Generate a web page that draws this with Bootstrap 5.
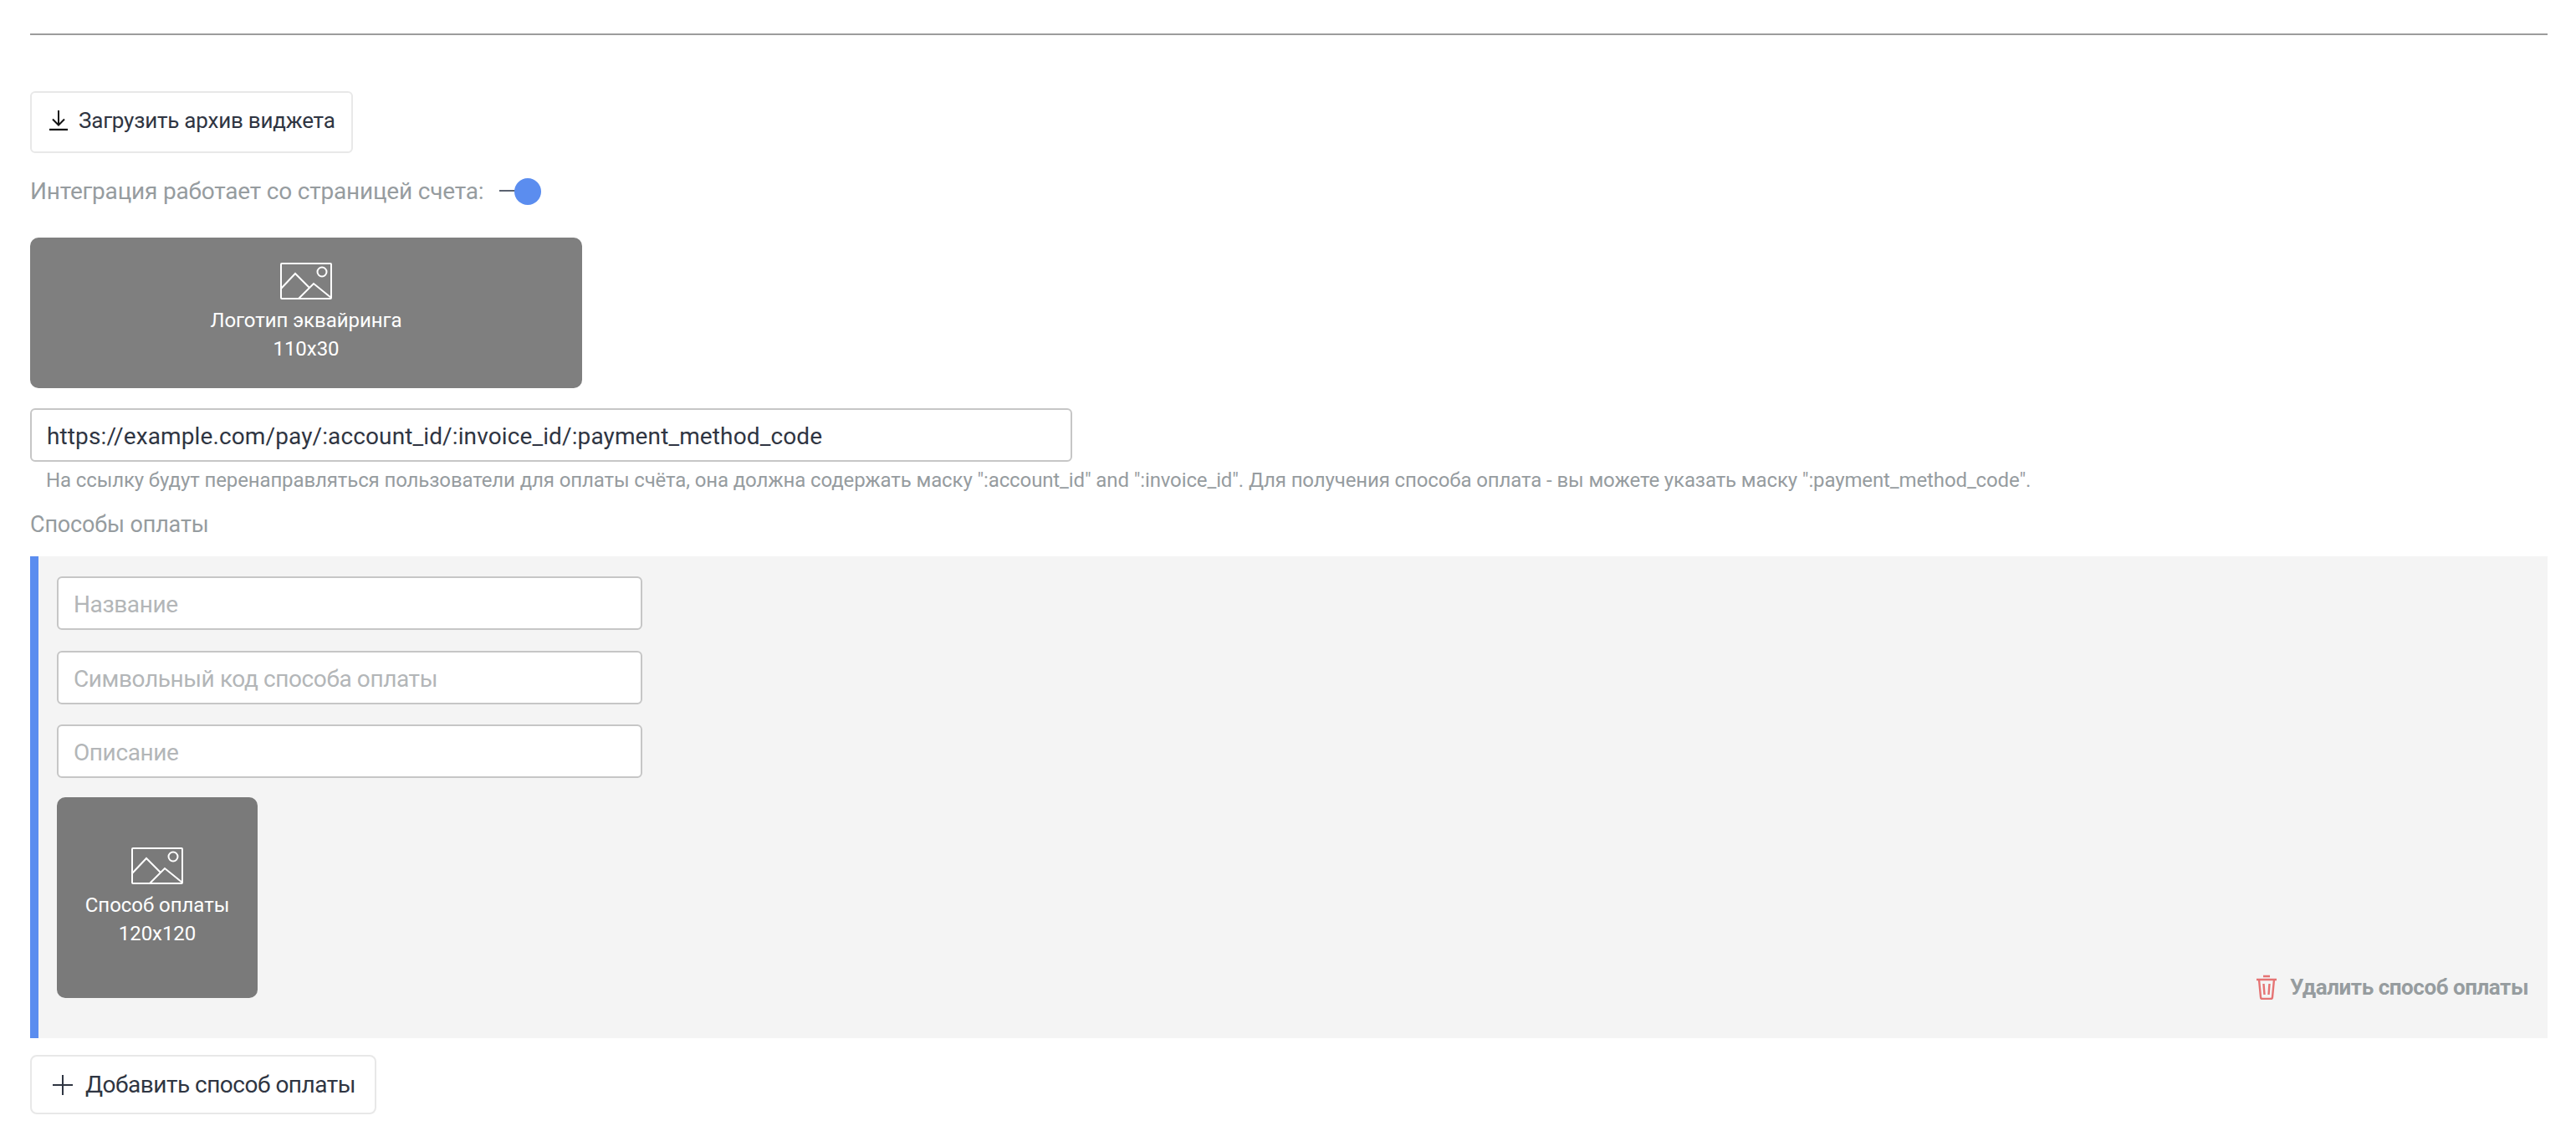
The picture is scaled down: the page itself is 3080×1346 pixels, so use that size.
<!DOCTYPE html>
<html lang="ru"><head><meta charset="utf-8"><title>Виджет</title>
<link rel="stylesheet" href="https://cdn.jsdelivr.net/npm/bootstrap@5.3.0/dist/css/bootstrap.min.css">
<style>
body{font-family:Roboto,"Noto Sans","Liberation Sans",sans-serif;color:#2f3542;background:#fff}
.page-wrap{padding:40px 34px 0 36px}
.top-rule{margin:0 0 67px;border:0;border-top:2px solid #9c9c9c;opacity:1}
.act-btn{display:inline-flex;align-items:center;background:#fff;border:2px solid #e8e8e8;border-radius:6px;color:#2f3542;font-size:26px;line-height:34px;padding:16px 19px 20px 20px;letter-spacing:-.22px}
.act-btn svg{flex:none;margin-right:12px}
.act-add{height:71px;font-size:28px;padding:0 23px 0 25px;border-radius:8px;margin-top:20px;letter-spacing:-.5px}
.act-add svg{margin-right:15px}
.switch-row{height:64px;margin-bottom:23px;color:#969c9f;font-size:28px;letter-spacing:-.2px;margin-top:14px}
.mini-switch{position:relative;width:48px;height:32px;margin-left:19px}
.mini-switch::before{content:"";position:absolute;left:0;top:14px;width:20px;height:2px;background:#5a6270}
.mini-switch::after{content:"";position:absolute;left:18px;top:0;width:32px;height:32px;border-radius:50%;background:#5b8def}
.upload-box{background:rgba(0,0,0,.5);color:#fff;border-radius:10px;font-size:24px;line-height:34px;text-align:center;display:flex;flex-direction:column;align-items:center;letter-spacing:-.05px}
.upload-logo{width:660px;height:180px;padding-top:30px}
.upload-pay{width:240px;height:240px;padding-top:60px}
.upload-box svg{margin-bottom:8px}
.field-url.form-control{width:1246px;height:64px;margin-top:24px;border:2px solid #c6c6c6;border-radius:6px;font-size:28px;padding:2px 18px 0;color:#2f3542;box-shadow:none;letter-spacing:.12px}
.field-hint{margin:6px 0 0 19px;font-size:24px;line-height:32px;color:#969c9f;white-space:nowrap;letter-spacing:-.12px}
.group-title{margin:18px 0 19px;font-size:27px;line-height:38px;color:#969c9f;letter-spacing:-.15px}
.pay-panel{background:#f4f4f4;border-left:10px solid #5b8def;padding:24px 23px 48px 22px}
.field-sm.form-control{width:700px;height:64px;margin-bottom:24px;border:2px solid #c6c6c6;border-radius:6px;font-size:28px;padding:2px 18px 0;box-shadow:none;color:#2f3542}
.field-sm.form-control::placeholder{color:#b3b6b8;opacity:1;letter-spacing:-.4px}
.field-sm.field-first.form-control{margin-bottom:25px}
.field-last.form-control{margin-bottom:23px}
.del-link{color:#969c9f;font-weight:700;font-size:26px;line-height:34px;text-decoration:none;margin-bottom:-4px;letter-spacing:-.45px}
</style></head><body>
<main class="page-wrap">
<hr class="top-rule">
<button type="button" class="act-btn"><svg width="24" height="24" viewBox="0 0 24 24" fill="none" stroke="#111" stroke-width="2"><path d="M12 0v17M5 10.500l7 7 7-7"/><path d="M1 23h22" stroke-width="2.400"/></svg>Загрузить архив виджета</button>
<div class="switch-row d-flex align-items-center">Интеграция работает со страницей счета:<span class="mini-switch"></span></div>
<div class="upload-box upload-logo"><svg width="62" height="44" viewBox="0 0 62 44" fill="none" stroke="#fff" stroke-width="2"><rect x="1" y="1" width="60" height="42" rx="1"/><circle cx="50" cy="11" r="5.500"/><path d="M1 31 18 13l17 17M22 43l18-18 21 17"/></svg><span>Логотип эквайринга</span><span>110x30</span></div>
<input class="form-control field-url" type="text" value="https://example.com/pay/:account_id/:invoice_id/:payment_method_code" aria-label="Ссылка">
<p class="field-hint">На ссылку будут перенаправляться пользователи для оплаты счёта, она должна содержать маску ":account_id" and ":invoice_id". Для получения способа оплата - вы можете указать маску ":payment_method_code".</p>
<div class="group-title">Способы оплаты</div>
<section class="pay-panel">
<input class="form-control field-sm field-first" type="text" placeholder="Название">
<input class="form-control field-sm" type="text" placeholder="Символьный код способа оплаты">
<input class="form-control field-sm field-last" type="text" placeholder="Описание">
<div class="d-flex justify-content-between align-items-end">
<div class="upload-box upload-pay"><svg width="62" height="44" viewBox="0 0 62 44" fill="none" stroke="#fff" stroke-width="2"><rect x="1" y="1" width="60" height="42" rx="1"/><circle cx="50" cy="11" r="5.500"/><path d="M1 31 18 13l17 17M22 43l18-18 21 17"/></svg><span>Способ оплаты</span><span>120x120</span></div>
<a href="#" class="del-link d-flex align-items-center"><svg class="me-3" width="24" height="30" viewBox="0 0 24 30" fill="none" stroke="#e57373" stroke-width="2.400"><path d="M0 6h24M8 2h8M3 6l2 21a2 2 0 0 0 2 2h10a2 2 0 0 0 2-2l2-21M8.500 11l1 13M15.500 11l-1 13"/></svg>Удалить способ оплаты</a>
</div>
</section>
<button type="button" class="act-btn act-add"><svg width="24" height="24" viewBox="0 0 24 24" fill="none" stroke="#2f3542" stroke-width="2"><path d="M12 0v24M0 12h24"/></svg>Добавить способ оплаты</button>
</main>
<script src="https://cdn.jsdelivr.net/npm/bootstrap@5.3.0/dist/js/bootstrap.bundle.min.js"></script>
</body></html>
